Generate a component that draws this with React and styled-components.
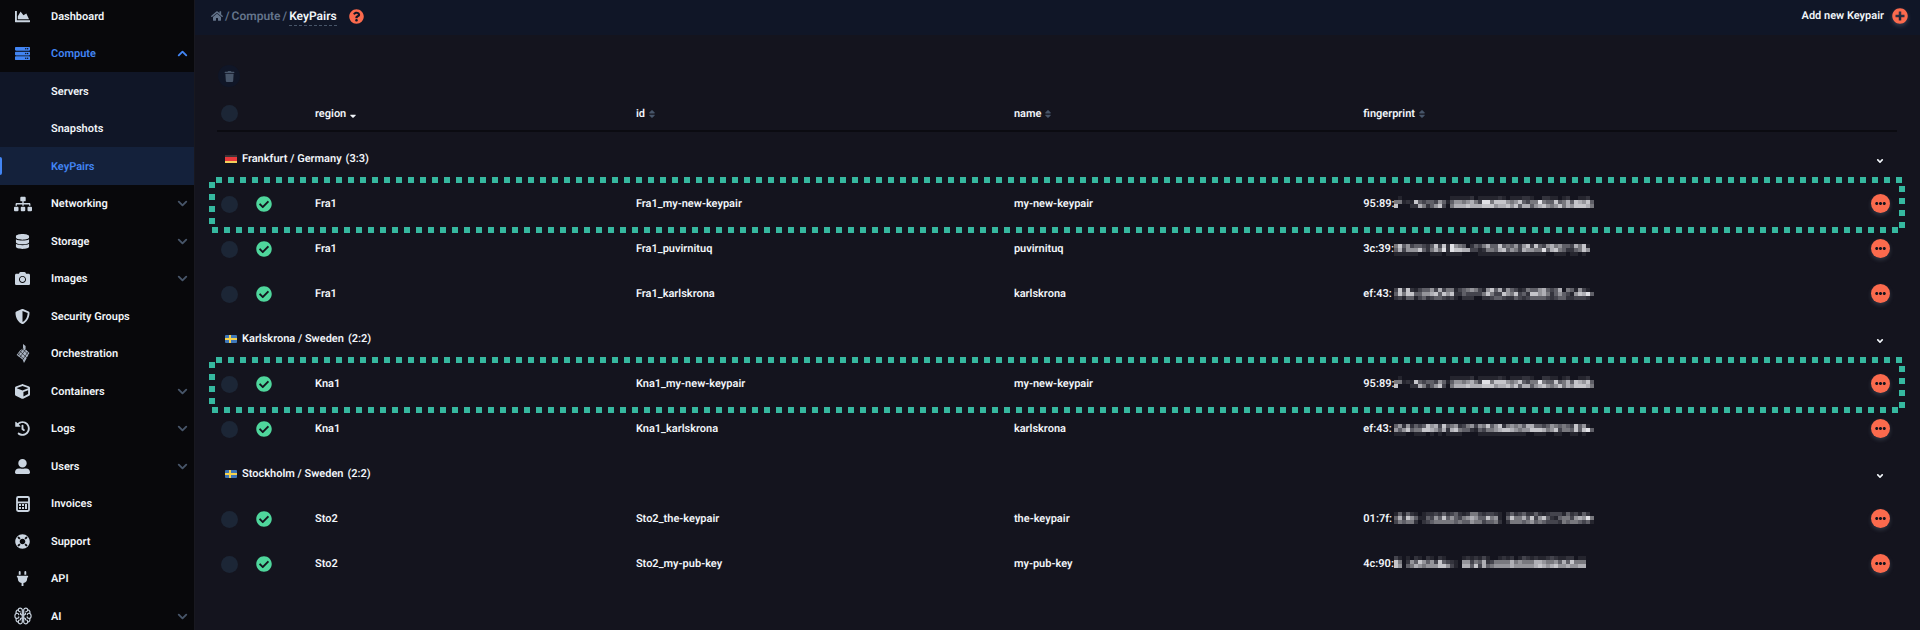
import React from 'react';
import styled, { createGlobalStyle } from 'styled-components';
import {
  FaAngleDown,
  FaCamera,
  FaChartArea,
  FaCheckCircle,
  FaCube,
  FaDatabase,
  FaEllipsisH,
  FaHistory,
  FaHome,
  FaLifeRing,
  FaPlug,
  FaPlusCircle,
  FaQuestionCircle,
  FaServer,
  FaShieldAlt,
  FaSitemap,
  FaSort,
  FaSortDown,
  FaTrash,
  FaUserAlt,
} from 'react-icons/fa';
import { ChevronDown, ChevronUp } from 'lucide-react';

const GlobalStyle = createGlobalStyle`
  * {
    box-sizing: border-box;
  }
  body {
    margin: 0;
    background: #14141e;
    color: #f1f5f9;
    font-family: Roboto, sans-serif;
    font-size: 11px;
    font-weight: 600;
    line-height: 16px;
    text-rendering: geometricPrecision;
  }
  a {
    color: inherit;
    text-decoration: none;
  }
  button {
    padding: 0;
    border: 0;
    background: none;
    color: inherit;
    font: inherit;
    text-rendering: inherit;
    cursor: pointer;
  }
  svg {
    display: block;
  }
`;

const Layout = styled.div`
  display: flex;
  height: 100vh;
  overflow: hidden;
`;

const Sidebar = styled.nav`
  flex: 0 0 195px;
  overflow: hidden;
  background: #08080b;
  border-right: 1px solid #181820;
`;

const NavList = styled.ul`
  list-style: none;
  margin: -3px 0 0;
  padding: 0;
`;

const NavItem = styled.li`
  height: 37px;
  background: ${({ $sub, $active }) => ($active ? '#14213b' : $sub ? '#101627' : 'transparent')};
  &:nth-child(odd) {
    height: 38px;
  }
`;

const NavLink = styled.a`
  display: grid;
  grid-template-columns: 45px 1fr 19px;
  column-gap: 6px;
  align-items: center;
  height: 100%;
  color: ${({ $active }) => ($active ? '#4285f4' : '#f1f5f9')};
  .chevron {
    color: ${({ $active }) => ($active ? '#4285f4' : '#475569')};
  }
`;

const NavLabel = styled.span`
  padding-top: 1px;
`;

const NavIcon = styled.span`
  display: flex;
  align-items: center;
  justify-content: center;
  color: ${({ $active }) => ($active ? '#4285f4' : '#cbd5e1')};
`;

const ActiveBar = styled.span`
  width: 2px;
  height: 18px;
  border-radius: 0 2px 2px 0;
  background: #4285f4;
`;

const Main = styled.main`
  flex: 1;
  min-width: 0;
`;

const TopBar = styled.header`
  display: flex;
  align-items: center;
  justify-content: space-between;
  height: 35px;
  padding: 0 12px 3px 16px;
  background: #101627;
`;

const Breadcrumb = styled.div`
  display: flex;
  align-items: center;
  gap: 2px;
  font-size: 12px;
  color: #64748b;
`;

const Current = styled.span`
  color: #f1f5f9;
  border-bottom: 1px dashed #475569;
  line-height: 18px;
  margin-top: 1px;
`;

const HelpButton = styled.button`
  margin-left: 10px;
  color: #fb6a4d;
`;

const AddButton = styled.button`
  display: flex;
  align-items: center;
  gap: 8px;
  svg {
    color: #fb6a4d;
    filter: drop-shadow(0 2px 2px rgba(148, 163, 184, 0.3));
  }
`;

const Content = styled.section`
  padding: 30px 23px 0 22px;
`;

const TrashButton = styled.button`
  display: flex;
  align-items: center;
  justify-content: center;
  width: 22px;
  height: 22px;
  margin: 0 0 10px 1px;
  border-radius: 50%;
  background: #101627;
  color: #475569;
`;

const Table = styled.table`
  width: 100%;
  table-layout: fixed;
  border-collapse: separate;
  border-spacing: 0;
  text-align: left;
  th,
  td {
    padding: 0;
    font-weight: 600;
  }
  thead th {
    height: 35px;
    border-bottom: 2px solid #0b0b11;
  }
  tbody::before {
    content: '';
    display: block;
    height: 4px;
  }
  tbody input {
    margin-top: 2px;
  }
`;

const Col = styled.col`
  width: ${({ $width }) => $width};
`;

const SortButton = styled.button`
  display: flex;
  align-items: center;
  gap: 2px;
  svg {
    color: ${({ $sorted }) => ($sorted ? '#f1f5f9' : '#475569')};
  }
`;

const Row = styled.tr`
  position: relative;
  height: 45px;
`;

const CheckBox = styled.input`
  appearance: none;
  display: block;
  width: 17px;
  height: 17px;
  margin: 0 0 0 4px;
  border-radius: 50%;
  background: #1c2636;
`;

const Status = styled.span`
  display: block;
  padding-left: 4px;
  color: #4fd69c;
`;

const GroupName = styled.div`
  display: flex;
  align-items: center;
  gap: 4px;
  padding-left: 8px;
`;

const ToggleButton = styled.button`
  display: block;
  margin: 4px auto 0;
`;

const MoreButton = styled.button`
  display: flex;
  align-items: center;
  justify-content: center;
  width: 19px;
  height: 19px;
  margin: 0 auto;
  border-radius: 50%;
  background: #fb6a4d;
  color: #14141e;
  box-shadow: 0 2px 4px rgba(148, 163, 184, 0.25);
`;

const Fingerprint = styled.div`
  display: flex;
  align-items: center;
  span {
    width: 27px;
    white-space: nowrap;
  }
`;

const dots = (angle) =>
  `repeating-linear-gradient(${angle}, #36b9a0 0 6px, transparent 6px 12px) no-repeat`;

const Highlight = styled.div`
  position: absolute;
  inset: -4px -8px -7px;
  pointer-events: none;
  background:
    ${dots('90deg')} 7px 0 / calc(100% - 10px) 6px,
    ${dots('90deg')} 3px 100% / calc(100% - 10px) 6px,
    ${dots('180deg')} 0 5px / 6px 42px,
    ${dots('180deg')} 100% 9px / 6px 42px;
`;

const OrchestrationIcon = () => (
  <svg width="14" height="19" viewBox="0 0 14 19" fill="#aab4c2">
    <path d="M7 0 L9.6 2 V5.2 L13.4 9 L10.2 15 L8 19 L6.6 15.6 L0.6 11 L4 6.4 L7 4.6 Z" />
    <path
      d="M3.6 6.8 L11 14 M1.8 9.4 L8.2 15.4 M6.4 4.8 L12.4 10.8 M10 5 L3.6 13.6 M12 8 L6.8 15.6 M7.4 4.4 L1.6 11.6"
      stroke="#08080b"
      strokeWidth="0.6"
    />
  </svg>
);

const InvoiceIcon = () => (
  <svg width="14" height="16" viewBox="0 0 14 16" fill="none" stroke="#cbd5e1">
    <rect x="1" y="1" width="12" height="14" rx="1.2" strokeWidth="1.8" />
    <path d="M1 6.4 H13" strokeWidth="1.8" />
    <path d="M3 9 H5 M6 9 H8 M9 9 H11 M3 12 H5 M6 12 H8" strokeWidth="1.8" />
    <path d="M10 8 V13" strokeWidth="2" />
  </svg>
);

const BrainIcon = () => (
  <svg
    width="18"
    height="18"
    viewBox="0 0 18 18"
    fill="none"
    stroke="#cbd5e1"
    strokeWidth="1.2"
    strokeLinecap="round"
  >
    {['', 'translate(18 0) scale(-1 1)'].map((transform) => (
      <g key={transform} transform={transform}>
        <path d="M8.3 2.8 C7.6 0.6 4.6 0.6 4.2 2.9 C2.2 3.1 1.6 5 2.3 6.4 C0.4 7.4 0.4 10.6 2.3 11.6 C1.6 13.4 2.6 15 4.3 15.1 C4.8 17.4 7.8 17.4 8.3 15.2 Z" />
        <path d="M4.4 3.2 C4.5 4.4 5.4 4.8 6.2 4.8 M2.6 6.4 C3.6 6 4.6 6.6 4.7 7.6 M8 8 C6.8 7.8 6.4 7 6.5 6.4 M2.5 11.4 C4 11.6 4.8 10.8 4.8 9.9 M8 11 C6.6 11 6.2 12 6.5 12.8 M4.4 14.8 C4.2 13.8 4.8 13.2 5.2 13.2" />
      </g>
    ))}
  </svg>
);

const Flag = ({ country }) => (
  <svg width="13" height="8" viewBox="0 0 13 8">
    {country === 'de' ? (
      <>
        <rect width="12" height="3" fill="#3b3437" />
        <rect y="2" width="12" height="4" fill="#e8383b" />
        <rect y="6" width="12" height="2" fill="#f3cf5b" />
      </>
    ) : (
      <>
        <rect width="12" height="8" rx="1" fill="#3f77b8" />
        <path d="M4 0 H6 V8 H4 Z M0 3 H12 V5 H0 Z" fill="#f5d34f" />
      </>
    )}
  </svg>
);

// each digit is the brightness of one 4px block
const MASKS = {
  a: {
    top: 2,
    rows: [
      '001000000000000111112011111210111221002211012001120',
      '055121843443641466567539958886568435595448457487684',
      '080002275246830577787778886778684774678656857688875',
    ],
  },
  b: {
    top: 5,
    rows: [
      '058463443248382965402435744845463683843675644375810',
      '047366684257592988773312554784653766559478542245860',
      '011111100011101111000011111111111111111001110110100',
    ],
  },
  c: {
    top: 4,
    rows: [
      '038382134463735513456531684726431254467434705416310',
      '048588446678486822433335853386583428867524643168794',
      '023144134234432310222002234432243234444323442233320',
    ],
  },
  d: {
    top: 5,
    rows: [
      '046262434867384562356365846825656477443465454384610',
      '064684558876472785442143556788765668887568355484894',
      '011100111010101111000011111111111100111001100110100',
    ],
  },
  e: {
    top: 3,
    rows: [
      '014142101223242342125532332102423422421233314231420',
      '047386411436484643567644856104855748368421455367695',
      '035455202345555545446553445202555456454333254554341',
    ],
  },
  f: {
    top: 2,
    rows: [
      '031010210210210000121213100121201321211232112201100',
      '085026486463843210663547235555756555776556474855500',
      '086045765666886310774837456666766666787678667667700',
    ],
  },
};
const SHADES = [0, 0.08, 0.14, 0.22, 0.34, 0.45, 0.58, 0.7, 0.8, 0.93];

const Mask = ({ kind }) => {
  const { top, rows } = MASKS[kind];
  return (
    <svg width="204" height="20" shapeRendering="crispEdges" fill="#f1f1f5" aria-hidden="true">
      {rows.map((row, y) =>
        [...row].map((shade, x) => (
          <rect
            key={`${x}-${y}`}
            x={x * 4}
            y={top + y * 4}
            width="4"
            height="4"
            opacity={SHADES[shade]}
          />
        ))
      )}
    </svg>
  );
};

const navItems = [
  { label: 'Dashboard', icon: <FaChartArea size={15} /> },
  { label: 'Compute', icon: <FaServer size={15} />, open: true },
  { label: 'Servers', sub: true },
  { label: 'Snapshots', sub: true },
  { label: 'KeyPairs', sub: true, active: true },
  { label: 'Networking', icon: <FaSitemap size={18} />, menu: true },
  { label: 'Storage', icon: <FaDatabase size={15} />, menu: true },
  { label: 'Images', icon: <FaCamera size={15} />, menu: true },
  { label: 'Security Groups', icon: <FaShieldAlt size={15} /> },
  { label: 'Orchestration', icon: <OrchestrationIcon /> },
  { label: 'Containers', icon: <FaCube size={15} />, menu: true },
  { label: 'Logs', icon: <FaHistory size={15} />, menu: true },
  { label: 'Users', icon: <FaUserAlt size={15} />, menu: true },
  { label: 'Invoices', icon: <InvoiceIcon /> },
  { label: 'Support', icon: <FaLifeRing size={15} /> },
  { label: 'API', icon: <FaPlug size={15} /> },
  { label: 'AI', icon: <BrainIcon />, menu: true },
];

const groups = [
  {
    title: 'Frankfurt / Germany',
    count: '(3:3)',
    country: 'de',
    rows: [
      { region: 'Fra1', name: 'my-new-keypair', print: '95:89:', mask: 'a', highlight: true },
      { region: 'Fra1', name: 'puvirnituq', print: '3c:39:', mask: 'b' },
      { region: 'Fra1', name: 'karlskrona', print: 'ef:43:', mask: 'c' },
    ],
  },
  {
    title: 'Karlskrona / Sweden',
    count: '(2:2)',
    country: 'se',
    rows: [
      { region: 'Kna1', name: 'my-new-keypair', print: '95:89:', mask: 'a', highlight: true },
      { region: 'Kna1', name: 'karlskrona', print: 'ef:43:', mask: 'd' },
    ],
  },
  {
    title: 'Stockholm / Sweden',
    count: '(2:2)',
    country: 'se',
    rows: [
      { region: 'Sto2', name: 'the-keypair', print: '01:7f:', mask: 'e' },
      { region: 'Sto2', name: 'my-pub-key', print: '4c:90:', mask: 'f' },
    ],
  },
];

const SideNav = () => (
  <Sidebar>
    <NavList>
      {navItems.map(({ label, icon, sub, active, open, menu }) => (
        <NavItem key={label} $sub={sub} $active={active}>
          <NavLink href="#" $active={active || open}>
            {active ? <ActiveBar /> : <NavIcon $active={open}>{icon}</NavIcon>}
            <NavLabel>{label}</NavLabel>
            {open && <ChevronUp className="chevron" size={15} strokeWidth={3} />}
            {menu && <ChevronDown className="chevron" size={15} strokeWidth={3} />}
          </NavLink>
        </NavItem>
      ))}
    </NavList>
  </Sidebar>
);

const KeyPairRow = ({ region, name, print, mask, highlight }) => (
  <Row>
    <td>
      <CheckBox type="checkbox" aria-label={`Select ${region}_${name}`} />
      {highlight && <Highlight />}
    </td>
    <td>
      <Status>
        <FaCheckCircle size={16} />
      </Status>
    </td>
    <td>{region}</td>
    <td>{`${region}_${name}`}</td>
    <td>{name}</td>
    <td>
      <Fingerprint>
        <span>{print}</span>
        <Mask kind={mask} />
      </Fingerprint>
    </td>
    <td>
      <MoreButton aria-label="More actions">
        <FaEllipsisH size={11} />
      </MoreButton>
    </td>
  </Row>
);

const App = () => (
  <Layout>
    <GlobalStyle />
    <SideNav />
    <Main>
      <TopBar>
        <Breadcrumb>
          <a href="#" aria-label="Home">
            <FaHome size={12} />
          </a>
          <span>/</span>
          <a href="#">Compute</a>
          <span>/</span>
          <Current>KeyPairs</Current>
          <HelpButton aria-label="Help">
            <FaQuestionCircle size={15} />
          </HelpButton>
        </Breadcrumb>
        <AddButton>
          Add new Keypair
          <FaPlusCircle size={16} />
        </AddButton>
      </TopBar>
      <Content>
        <TrashButton aria-label="Delete selected">
          <FaTrash size={11} />
        </TrashButton>
        <Table>
          <colgroup>
            <Col $width="35px" />
            <Col $width="63px" />
            <Col $width="19.1%" />
            <Col $width="22.5%" />
            <Col $width="20.8%" />
            <Col />
            <Col $width="34px" />
          </colgroup>
          <thead>
            <tr>
              <th>
                <CheckBox type="checkbox" aria-label="Select all" />
              </th>
              <th />
              <th>
                <SortButton $sorted>
                  region <FaSortDown size={10} />
                </SortButton>
              </th>
              {['id', 'name', 'fingerprint'].map((column) => (
                <th key={column}>
                  <SortButton>
                    {column} <FaSort size={10} />
                  </SortButton>
                </th>
              ))}
              <th />
            </tr>
          </thead>
          <tbody>
            {groups.map(({ title, count, country, rows }) => (
              <React.Fragment key={title}>
                <Row>
                  <td colSpan={6}>
                    <GroupName>
                      <Flag country={country} />
                      <span>{title}</span>
                      <span>{count}</span>
                    </GroupName>
                  </td>
                  <td>
                    <ToggleButton aria-label={`Toggle ${title}`}>
                      <FaAngleDown size={10} />
                    </ToggleButton>
                  </td>
                </Row>
                {rows.map((row) => (
                  <KeyPairRow key={`${row.region}_${row.name}`} {...row} />
                ))}
              </React.Fragment>
            ))}
          </tbody>
        </Table>
      </Content>
    </Main>
  </Layout>
);

export default App;
